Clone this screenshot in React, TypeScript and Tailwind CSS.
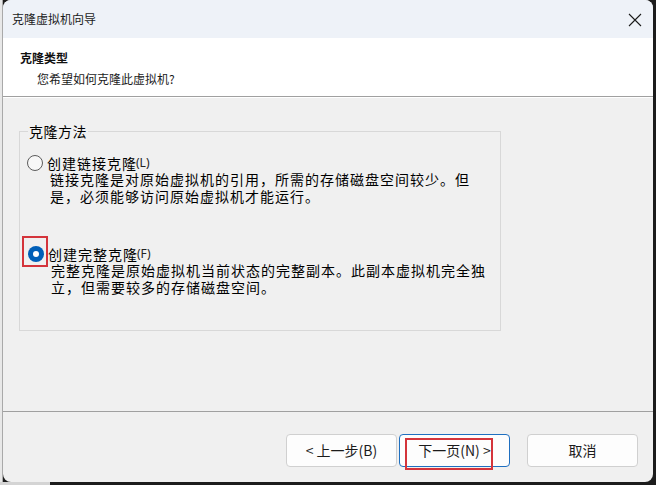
import React from "react";

const cjk = { fontFamily: '"Noto Sans CJK SC", "Noto Sans", sans-serif' };

function Radio({ checked }: { checked?: boolean }) {
  if (checked) {
    return (
      <span className="relative flex h-[16px] w-[16px] shrink-0 items-center justify-center rounded-full bg-[#005fb8]">
        <span className="h-[6px] w-[6px] rounded-full bg-white" />
        <span className="absolute left-[-6px] top-[-10px] h-[31px] w-[26px] border-2 border-[#d4343b]" />
      </span>
    );
  }
  return <span className="h-[16px] w-[16px] shrink-0 rounded-full border border-[#5c5c5c] bg-[#f7f7f7]" />;
}

function Option({ checked, label, hotkey, lines }: { checked?: boolean; label: string; hotkey: string; lines: string[] }) {
  return (
    <div>
      <div className="flex h-[16px] items-center gap-[4px]">
        <Radio checked={checked} />
        <span className="text-[14px] leading-[16px] tracking-[1px]">{label}</span>
        <span className="-ml-[5px] text-[12px] leading-[16px] text-[#222]" style={{ fontFamily: '"Noto Sans", sans-serif' }}>
          {hotkey}
        </span>
      </div>
      <div className="whitespace-nowrap pl-[23px] text-[14px] leading-[17px] tracking-[1px]">
        {lines.map((l) => (
          <div key={l}>{l}</div>
        ))}
      </div>
    </div>
  );
}

export default function App() {
  return (
    <div className="flex h-[485px] w-[656px] flex-col overflow-hidden bg-[#1c1c1c] text-black" style={cjk}>
      <div className="flex min-h-0 flex-1">
        <div className="w-[3px] border-r border-[#a9a9a9] bg-[#e8e8e8]" />
        <div className="mr-[3px] flex flex-1 flex-col overflow-hidden rounded-[8px] bg-[#f0f0f0]">
          {/* title bar */}
          <div className="flex h-[38px] shrink-0 items-center justify-between bg-[#eef2f8] pl-[9px] pr-[11px]">
            <span className="text-[12px] leading-[18px] text-[#1b1b1b]">克隆虚拟机向导</span>
            <svg width="14" height="14" viewBox="0 0 14 14" className="mt-[1px]">
              <path d="M1 1 L13 13 M13 1 L1 13" stroke="#1b1b1b" strokeWidth="1.1" fill="none" />
            </svg>
          </div>
          {/* header */}
          <div className="h-[59px] shrink-0 border-b border-[#a0a0a0] bg-white pl-[17px] pt-[11px]">
            <div className="text-[12px] font-bold leading-[18px] text-[#111]">克隆类型</div>
            <div className="ml-[17px] mt-[3px] text-[12px] leading-[18px] text-[#1b1b1b]">您希望如何克隆此虚拟机?</div>
          </div>
          {/* body */}
          <div className="flex-1 border-t border-white">
            <div className="relative ml-[16px] mt-[33px] flex h-[200px] w-[482px] flex-col gap-[41px] border border-[#d8d8d8] pl-[7px] pt-[23px]">
              <span className="absolute left-[8px] top-[-10px] bg-[#f0f0f0] px-[1px] text-[14px] leading-[18px] tracking-[0.5px]">
                克隆方法
              </span>
              <Option
                label="创建链接克隆"
                hotkey="(L)"
                lines={["链接克隆是对原始虚拟机的引用，所需的存储磁盘空间较少。但", "是，必须能够访问原始虚拟机才能运行。"]}
              />
              <div className="ml-[1px]">
                <Option
                  checked
                  label="创建完整克隆"
                  hotkey="(F)"
                  lines={["完整克隆是原始虚拟机当前状态的完整副本。此副本虚拟机完全独", "立，但需要较多的存储磁盘空间。"]}
                />
              </div>
            </div>
          </div>
          {/* footer */}
          <div className="flex h-[71px] shrink-0 justify-end border-t border-[#a0a0a0] pr-[15px] pt-[22px]">
            <button className="h-[33px] w-[111px] rounded-[4px] border border-[#d0d0d0] bg-[#fdfdfd] text-[14px] text-[#1b1b1b]">
              &lt; 上一步(B)
            </button>
            <button className="relative ml-[2px] h-[33px] w-[111px] rounded-[4px] border border-[#1f6fc0] bg-[#fdfdfd] text-[14px] text-[#1b1b1b]">
              下一页(N) &gt;
              <span className="absolute left-[5px] top-[3px] h-[32px] w-[88px] border-2 border-[#d4343b]" />
            </button>
            <button className="ml-[17px] h-[33px] w-[111px] rounded-[4px] border border-[#d0d0d0] bg-[#fdfdfd] text-[14px] text-[#1b1b1b]">
              取消
            </button>
          </div>
        </div>
      </div>
      <div className="flex h-[3px] shrink-0">
        <div className="w-[50px] bg-[#d4d4d4]" />
      </div>
    </div>
  );
}
